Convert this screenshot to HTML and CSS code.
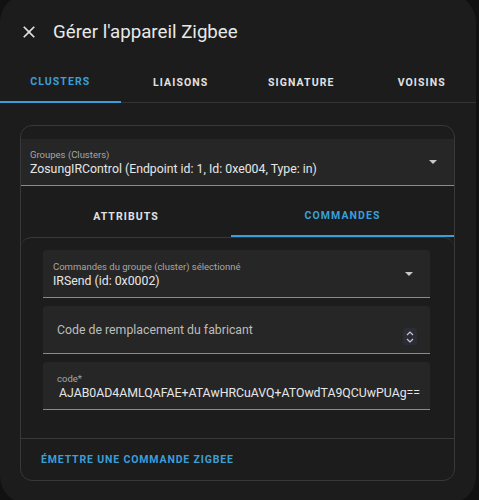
FILE: index.html
```html
<!DOCTYPE html>
<html lang="fr">
<head>
  <meta charset="UTF-8" />
  <title>Gérer l'appareil Zigbee</title>
  <link rel="stylesheet" href="styles.css">
</head>
<body>
  <div class="dialog">
    <header class="dialog-header">
      <button class="close-btn" aria-label="Fermer">
        <svg viewBox="0 0 24 24" width="20" height="20"><path d="M19,6.41L17.59,5L12,10.59L6.41,5L5,6.41L10.59,12L5,17.59L6.41,19L12,13.41L17.59,19L19,17.59L13.41,12L19,6.41Z" fill="currentColor"/></svg>
      </button>
      <h2>Gérer l'appareil Zigbee</h2>
    </header>

    <nav class="tabs">
      <div class="tab active">Clusters</div>
      <div class="tab">Liaisons</div>
      <div class="tab">Signature</div>
      <div class="tab">Voisins</div>
    </nav>

    <div class="content">
      <div class="card">
        <!-- sélection du cluster -->
        <div class="field select-field wide">
          <div class="field-text">
            <span class="field-label">Groupes (Clusters)</span>
            <span class="field-value">ZosungIRControl (Endpoint id: 1, Id: 0xe004, Type: in)</span>
          </div>
          <span class="arrow"></span>
        </div>

        <div class="subtabs">
          <div class="subtab">Attributs</div>
          <div class="subtab active">Commandes</div>
        </div>

        <div class="inner-card">
          <div class="field select-field">
            <div class="field-text">
              <span class="field-label">Commandes du groupe (cluster) sélectionné</span>
              <span class="field-value">IRSend (id: 0x0002)</span>
            </div>
            <span class="arrow"></span>
          </div>

          <div class="field number-field">
            <span class="placeholder">Code de remplacement du fabricant</span>
            <span class="spinner">
              <svg viewBox="0 0 10 14" width="10" height="14"><path d="M2 5 L5 2 L8 5 M2 9 L5 12 L8 9" fill="none" stroke="#c8c8d0" stroke-width="1.2"/></svg>
            </span>
          </div>

          <div class="field text-field">
            <div class="field-text">
              <span class="field-label">code*</span>
              <span class="field-value code">AJAB0AD4AMLQAFAE+ATAwHRCuAVQ+ATOwdTA9QCUwPUAg==</span>
            </div>
          </div>
        </div>

        <div class="card-actions">
          <button class="text-btn">Émettre une commande Zigbee</button>
        </div>
      </div>
    </div>
  </div>
</body>
</html>
```

FILE: styles.css
```css
body {
  margin: 0;
  background-color: #111;
  font-family: 'Roboto', 'Noto Sans', sans-serif;
  color: #e1e1e1;
  overflow: hidden;
}

.dialog {
  width: 476px;
  height: 510px;
  margin-top: -6px;
  background-color: #1c1c1c;
  border-radius: 28px;
  overflow: hidden;
}

.dialog-header {
  display: flex;
  align-items: center;
  height: 68px;
  padding: 8px 0 0 19px;
  box-sizing: border-box;
}

.close-btn {
  background: transparent;
  border: none;
  color: #e1e1e1;
  padding: 0;
  width: 20px;
  height: 20px;
  cursor: pointer;
}

.dialog-header h2 {
  margin: 0 0 0 14px;
  font-size: 18.7px;
  font-weight: 400;
  color: #e8e8e8;
}

.tabs {
  display: flex;
  width: 482px;
  height: 40px;
  border-bottom: 1px solid #333;
}

.tab {
  flex: 1;
  display: flex;
  align-items: center;
  justify-content: center;
  text-transform: uppercase;
  font-size: 10.5px;
  font-weight: 700;
  letter-spacing: 1.1px;
  color: #e1e1e1;
  box-sizing: border-box;
}

.tab.active {
  color: #3a9fd9;
  border-bottom: 2px solid #3a9fd9;
  margin-bottom: -1px;
}

.content {
  padding: 22px 21px 0 20px;
}

.card {
  height: 356px;
  border: 1px solid #383838;
  border-radius: 12px;
  box-sizing: border-box;
  display: flex;
  flex-direction: column;
  overflow: hidden;
}

.field {
  background-color: #262626;
  border-bottom: 1px solid #8a8a8a;
  border-radius: 4px 4px 0 0;
  height: 48px;
  box-sizing: border-box;
  display: flex;
  align-items: center;
}

.select-field.wide {
  margin-top: 13px;
  border-radius: 0;
  padding: 0 17px 0 9px;
  height: 47px;
}

.field-text {
  flex: 1;
  display: flex;
  flex-direction: column;
  padding-top: 2px;
}

.field-label {
  font-size: 9.5px;
  color: #a6a6a6;
  line-height: 12px;
}

.field-value {
  font-size: 12.3px;
  color: #e6e6e6;
  line-height: 16px;
}

.arrow {
  width: 0;
  height: 0;
  border-left: 4px solid transparent;
  border-right: 4px solid transparent;
  border-top: 4px solid #c8c8c8;
}

.subtabs {
  display: grid;
  grid-template-columns: 210px 1fr;
  height: 51px;
}

.subtab {
  display: flex;
  align-items: center;
  justify-content: center;
  padding-top: 9px;
  text-transform: uppercase;
  font-size: 10.5px;
  font-weight: 700;
  letter-spacing: 1.1px;
  color: #e1e1e1;
  box-sizing: border-box;
}

.subtab.active {
  color: #3a9fd9;
  border-bottom: 2px solid #3a9fd9;
}

.inner-card {
  border-top: 1px solid #383838;
  border-radius: 10px 10px 0 0;
  padding: 12px 24px 28px 22px;
  display: flex;
  flex-direction: column;
  gap: 8px;
}

.inner-card .select-field {
  padding: 0 17px 0 10px;
}

.number-field {
  padding: 0 13px 0 14px;
}

.placeholder {
  flex: 1;
  font-size: 12.3px;
  color: #bdbdbd;
}

.spinner {
  display: flex;
  align-items: center;
  justify-content: center;
  width: 14px;
  height: 17px;
  margin-top: 14px;
  background-color: #2c2c36;
  border-radius: 3px;
}

.text-field {
  padding: 0 10px 0 14px;
}

.code {
  padding-left: 2px;
}

.card-actions {
  border-top: 1px solid #383838;
  flex: 1;
  display: flex;
  align-items: center;
  padding-left: 20px;
}

.text-btn {
  background: transparent;
  border: none;
  padding: 0;
  font-family: 'Roboto', sans-serif;
  text-transform: uppercase;
  font-size: 10.5px;
  font-weight: 700;
  letter-spacing: 0.85px;
  color: #3a9fd9;
  cursor: pointer;
}
```
